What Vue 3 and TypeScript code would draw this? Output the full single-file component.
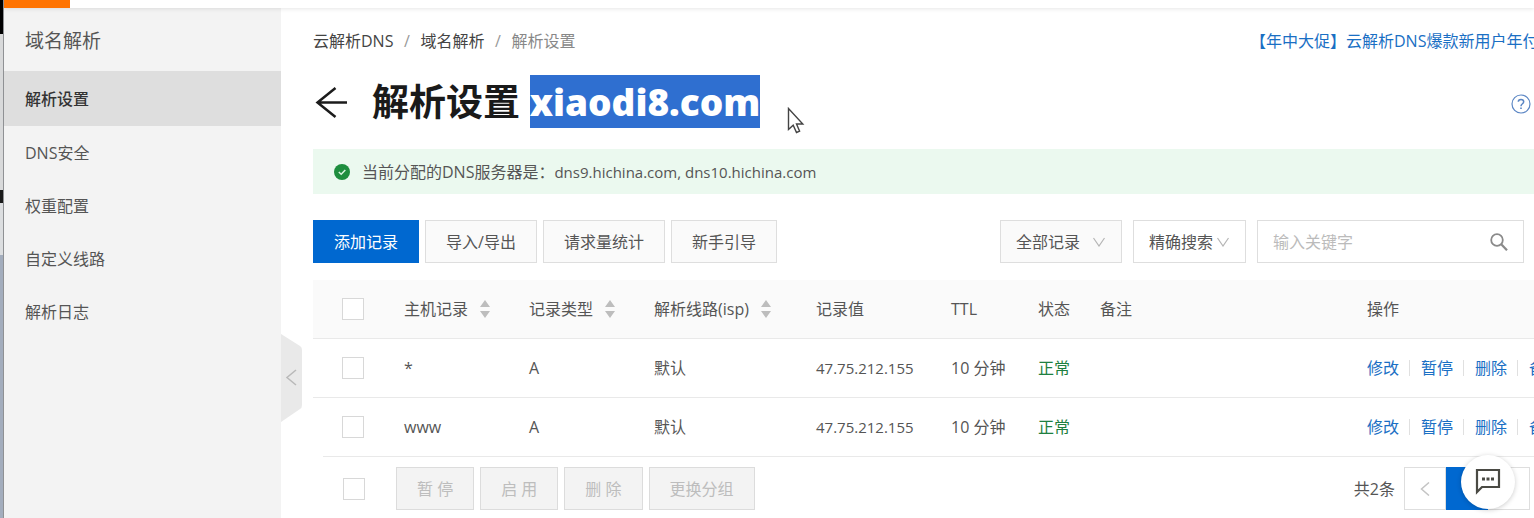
<script setup lang="ts">
import { ref } from 'vue'

interface DnsRecord {
  id: number
  host: string
  type: string
  line: string
  value: string
  ttl: string
  status: string
}

const navItems: string[] = ['解析设置', 'DNS安全', '权重配置', '自定义线路', '解析日志']
const activeNav = ref<string>('解析设置')

const toolbarButtons: string[] = ['导入/导出', '请求量统计', '新手引导']
const batchButtons: string[] = ['暂 停', '启 用', '删 除', '更换分组']
const rowActions: string[] = ['修改', '暂停', '删除', '备注']

const records: DnsRecord[] = [
  { id: 1, host: '*', type: 'A', line: '默认', value: '47.75.212.155', ttl: '10 分钟', status: '正常' },
  { id: 2, host: 'www', type: 'A', line: '默认', value: '47.75.212.155', ttl: '10 分钟', status: '正常' },
]

const selected = ref<number[]>([])
const keyword = ref<string>('')
</script>

<template>
  <div class="screen">
    <div class="edge" aria-hidden="true">
      <i class="edge-dark"></i>
      <i class="edge-light"></i>
      <i class="edge-mark"></i>
      <i class="edge-pale"></i>
      <i class="edge-blue"></i>
    </div>
    <div class="app">
      <header class="topbar"><div class="brand"></div></header>
      <div class="body">
        <aside class="sidebar">
          <h2 class="side-title">域名解析</h2>
          <nav>
            <a
              v-for="item in navItems"
              :key="item"
              href="#"
              class="side-item"
              :class="{ active: item === activeNav }"
              @click.prevent="activeNav = item"
            >{{ item }}</a>
          </nav>
          <button class="collapse" type="button" aria-label="收起">
            <svg width="22" height="88" viewBox="0 0 22 88">
              <path d="M0 0L19 12Q21 13 21 16V71Q21 74 19 75L0 88Z" fill="#e9e9e9" />
              <path d="M15 36L6 43.500L15 51" fill="none" stroke="#b9b9b9" stroke-width="1.500" />
            </svg>
          </button>
        </aside>

        <main class="main">
          <div class="crumb-row">
            <nav class="crumbs">
              <a href="#">云解析DNS</a>
              <span class="slash">/</span>
              <a href="#">域名解析</a>
              <span class="slash">/</span>
              <span class="current">解析设置</span>
            </nav>
            <a href="#" class="promo">【年中大促】云解析DNS爆款新用户年付</a>
          </div>

          <div class="title-row">
            <button class="back" type="button" aria-label="返回">
              <svg width="34" height="34" viewBox="0 0 34 34" fill="none" stroke="#1c1c1c" stroke-width="2.500">
                <path d="M33 17.500H3M21.500 3L3.500 17.500L21.500 32" />
              </svg>
            </button>
            <h1 class="title">解析设置 <mark>xiaodi8.com</mark></h1>
            <button class="help" type="button" aria-label="帮助">
              <svg width="20" height="24" viewBox="0 -4 20 24" fill="none" stroke="#5b86c4">
                <circle cx="10" cy="10" r="9" stroke-width="1.200" />
                <path d="M7.300 7.800Q7.300 5.500 10 5.500Q12.700 5.500 12.700 7.800Q12.700 9 11.200 10Q10 10.800 10 12.200" stroke-width="1.500" />
                <path d="M10 13.500V15" stroke-width="1.600" />
              </svg>
            </button>
          </div>

          <div class="notice">
            <svg width="16" height="16" viewBox="0 0 16 16">
              <circle cx="8" cy="8" r="8" fill="#1e8e3e" />
              <path d="M4.800 8L7.200 10.300L11.300 6" fill="none" stroke="#d9f5e0" stroke-width="1.500" />
            </svg>
            <span>当前分配的DNS服务器是：<span class="servers">dns9.hichina.com, dns10.hichina.com</span></span>
          </div>

          <div class="toolbar">
            <div class="group">
              <button class="btn primary" type="button">添加记录</button>
              <button v-for="b in toolbarButtons" :key="b" class="btn" type="button">{{ b }}</button>
            </div>
            <div class="filters">
              <div class="pick all">
                <select aria-label="记录范围"><option>全部记录</option></select>
                <svg width="12" height="10" viewBox="0 0 12 10"><path d="M.500 1L6 9L11.500 1" fill="none" stroke="#b5b5b5" stroke-width="1.200" /></svg>
              </div>
              <div class="pick exact">
                <select aria-label="搜索方式"><option>精确搜索</option></select>
                <svg width="12" height="10" viewBox="0 0 12 10"><path d="M.500 1L6 9L11.500 1" fill="none" stroke="#b5b5b5" stroke-width="1.200" /></svg>
              </div>
              <div class="search">
                <input v-model="keyword" type="text" placeholder="输入关键字" aria-label="输入关键字" />
                <button type="button" aria-label="搜索">
                  <svg width="18" height="18" viewBox="0 0 18 18" fill="none" stroke="#8a8a8a">
                    <circle cx="7" cy="7" r="5.800" stroke-width="1.800" />
                    <path d="M11 11L17 17.300" stroke-width="2.200" />
                  </svg>
                </button>
              </div>
            </div>
          </div>

          <table class="records">
            <colgroup>
              <col class="c-check" /><col class="c-host" /><col class="c-host" /><col class="c-line" />
              <col class="c-value" /><col class="c-ttl" /><col class="c-status" /><col /><col class="c-ops" />
            </colgroup>
            <thead>
              <tr>
                <th class="check"><input type="checkbox" aria-label="全选" /></th>
                <th v-for="h in ['主机记录', '记录类型', '解析线路(isp)']" :key="h">
                  <span class="sortable">{{ h }}
                    <svg width="12" height="18" viewBox="0 0 12 18" fill="#bdbdbd"><path d="M6 0L11 7H1ZM6 18L1 11H11Z" /></svg>
                  </span>
                </th>
                <th>记录值</th>
                <th>TTL</th>
                <th>状态</th>
                <th>备注</th>
                <th>操作</th>
              </tr>
            </thead>
            <tbody>
              <tr v-for="r in records" :key="r.id">
                <td class="check"><input v-model="selected" type="checkbox" :value="r.id" :aria-label="r.host" /></td>
                <td>{{ r.host }}</td>
                <td>{{ r.type }}</td>
                <td>{{ r.line }}</td>
                <td class="value">{{ r.value }}</td>
                <td>{{ r.ttl }}</td>
                <td class="ok">{{ r.status }}</td>
                <td></td>
                <td>
                  <div class="ops"><a v-for="a in rowActions" :key="a" href="#">{{ a }}</a></div>
                </td>
              </tr>
            </tbody>
          </table>

          <footer class="foot">
            <div class="group">
              <input type="checkbox" aria-label="全选本页" />
              <button v-for="b in batchButtons" :key="b" class="btn" type="button" disabled>{{ b }}</button>
            </div>
            <div class="pager">
              <span class="total">共2条</span>
              <button type="button" aria-label="上一页">
                <svg width="10" height="14" viewBox="0 0 10 14"><path d="M9 .500L1.500 7L9 13.500" fill="none" stroke="#c4c4c4" stroke-width="1.500" /></svg>
              </button>
              <button type="button" class="page" aria-label="第一页"></button>
              <button type="button" aria-label="下一页"></button>
            </div>
          </footer>
        </main>
      </div>
    </div>

    <button class="chat" type="button" aria-label="在线咨询">
      <svg width="26" height="28" viewBox="0 0 26 28">
        <path d="M2 2H24V19H7L2 24Z" fill="none" stroke="#4a4a44" stroke-width="2.200" />
        <path d="M7 9.500H10V12.500H7ZM11.500 9.500H14.500V12.500H11.500ZM16 9.500H19V12.500H16Z" fill="#4a4a44" />
      </svg>
    </button>
    <svg class="cursor" width="18" height="28" viewBox="0 0 18 28">
      <path d="M1.500 1.500V22.500L6.200 18.200L9.500 25.500L12.600 24.200L9.500 17H15.800Z" fill="#fff" stroke="#444" stroke-width="1.400" />
    </svg>
  </div>
</template>

<style>
body {
  margin: 0;
  overflow: hidden;
}
</style>

<style scoped>
* {
  box-sizing: border-box;
}

.screen {
  position: relative;
  display: flex;
  height: 100vh;
  overflow: hidden;
  background: #fff;
  color: #555;
  font-family: "Open Sans", "Noto Sans CJK SC", sans-serif;
  font-size: 16px;
  line-height: 24px;
  white-space: nowrap;
}

a {
  color: inherit;
  text-decoration: none;
}

button,
input,
select {
  margin: 0;
  font: inherit;
  color: inherit;
}

button {
  padding: 0;
  border: 0;
  background: none;
}

svg {
  display: block;
}

.edge {
  display: flex;
  flex: 0 0 4px;
  flex-direction: column;
  border-right: 1px solid #8f9194;
}

.edge-dark { flex: 0 0 34px; background: #000; }
.edge-light { flex: 0 0 156px; background: #d8d9da; }
.edge-mark { flex: 0 0 13px; background: #1a1a1a; }
.edge-pale { flex: 0 0 52px; background: #dcdee0; }
.edge-blue { flex: 1; background: #a3adbd; }

.app {
  display: flex;
  flex: 1;
  flex-direction: column;
  min-width: 0;
}

.topbar {
  z-index: 1;
  flex: 0 0 8px;
  background: #fff;
  box-shadow: 0 1px 4px rgba(0, 0, 0, 0.1);
}

.brand {
  width: 66px;
  height: 8px;
  background: #ff7300;
}

.body {
  display: flex;
  flex: 1;
  min-height: 0;
}

.sidebar {
  position: relative;
  flex: 0 0 277px;
  background: #f3f3f3;
}

.side-title {
  margin: 0;
  padding: 4px 0 0 21px;
  font-size: 19px;
  font-weight: 400;
  line-height: 59px;
}

.side-item {
  display: block;
  padding: 2px 0 0 21px;
  line-height: 51px;
}

.side-item.active {
  background: #dedede;
  color: #333;
  font-weight: 500;
  line-height: 53px;
}

.collapse {
  position: absolute;
  top: 326px;
  left: 100%;
}

.main {
  flex: 1;
  min-width: 0;
  padding-left: 32px;
}

.crumb-row {
  display: flex;
  justify-content: space-between;
  padding-top: 21px;
}

.crumbs {
  display: flex;
  color: #444;
}

.slash {
  width: 27px;
  color: #999;
  text-align: center;
}

.current {
  color: #888;
}

.promo {
  flex: 0 0 284px;
  overflow: hidden;
  color: #1a6fc4;
}

.title-row {
  display: flex;
  align-items: center;
  height: 53px;
  margin-top: 22px;
  padding-right: 3px;
}

.back {
  margin-left: 1px;
}

.title {
  margin: 0 auto 0 24px;
  color: #1a1a1a;
  font-size: 37px;
  font-weight: 700;
  line-height: 53px;
}

.title mark {
  display: inline-block;
  background: #2f6fd0;
  color: #fff;
  font-weight: 800;
}

.notice {
  display: flex;
  align-items: center;
  gap: 12px;
  height: 45px;
  margin-top: 21px;
  padding-left: 21px;
  background: #ebf9ef;
}

.servers,
.value {
  font-size: 15px;
}

.toolbar {
  display: flex;
  justify-content: space-between;
  margin-top: 26px;
  padding-right: 10px;
}

.group {
  display: flex;
  align-items: center;
  gap: 6px;
}

.btn {
  height: 43px;
  padding: 0 20px;
  border: 1px solid #dedede;
  background: #fafafa;
}

.btn.primary {
  border-color: #0068d0;
  background: #0068d0;
  color: #fff;
}

.btn:disabled {
  border-color: #dcdcdc;
  background: #f3f3f3;
  color: #bdbdbd;
}

.filters {
  display: flex;
  gap: 11px;
}

.pick {
  display: grid;
  align-items: center;
  height: 43px;
  border: 1px solid #dedede;
}

.pick select,
.pick svg {
  grid-area: 1 / 1;
}

.pick select {
  width: 100%;
  height: 41px;
  padding: 0 15px;
  border: 0;
  appearance: none;
  background: transparent;
}

.pick svg {
  justify-self: end;
  margin-right: 16px;
  pointer-events: none;
}

.pick.all {
  width: 122px;
  background: #fafafa;
}

.pick.exact {
  width: 113px;
}

.search {
  display: flex;
  align-items: center;
  width: 267px;
  height: 43px;
  padding: 0 15px;
  border: 1px solid #dedede;
}

.search input {
  flex: 1;
  min-width: 0;
  padding: 0;
  border: 0;
  outline: 0;
}

.search input::placeholder {
  color: #bbb;
}

.records {
  width: 100%;
  margin-top: 17px;
  border-collapse: separate;
  border-spacing: 0;
  table-layout: fixed;
}

.c-check { width: 71px; }
.c-host { width: 125px; }
.c-line { width: 162px; }
.c-value { width: 135px; }
.c-ttl { width: 87px; }
.c-status { width: 62px; }
.c-ops { width: 187px; }

.records th,
.records td {
  height: 59px;
  padding: 0 0 0 20px;
  border-bottom: 1px solid #e9e9e9;
  font-weight: 400;
  text-align: left;
}

.records th {
  background: #fafafa;
}

.records .check {
  padding-left: 29px;
}

.records tbody tr:last-child td {
  height: 58px;
  border-bottom: 0;
}

input[type="checkbox"] {
  display: block;
  width: 22px;
  height: 22px;
  border: 1px solid #d8d8d8;
  appearance: none;
  background: #fff;
}

.sortable {
  display: flex;
  align-items: center;
  gap: 11px;
}

.records .ok {
  color: #1e8040;
}

.ops {
  display: flex;
  align-items: center;
  overflow: hidden;
  color: #1a6fc4;
}

.ops a + a {
  display: flex;
  align-items: center;
}

.ops a + a::before {
  width: 1px;
  height: 16px;
  margin: 0 11px 0 10px;
  background: #e0e0e0;
  content: "";
}

.foot {
  display: flex;
  justify-content: space-between;
  margin-left: 10px;
  padding: 10px 4px 0 20px;
  border-top: 1px solid #e9e9e9;
}

.foot .group input {
  margin-right: 25px;
}

.pager {
  display: flex;
  align-items: center;
}

.total {
  margin-right: 9px;
}

.pager button {
  display: grid;
  place-items: center;
  width: 42px;
  height: 43px;
  border: 1px solid #dedede;
}

.pager .page {
  border-color: #0068d0;
  background: #0068d0;
}

.chat {
  position: absolute;
  right: 19px;
  bottom: 9px;
  display: grid;
  place-items: center;
  width: 54px;
  height: 54px;
  border-radius: 50%;
  background: #fff;
  box-shadow: 0 1px 5px rgba(0, 0, 0, 0.2);
}

.cursor {
  position: absolute;
  top: 107px;
  left: 787px;
}
</style>
